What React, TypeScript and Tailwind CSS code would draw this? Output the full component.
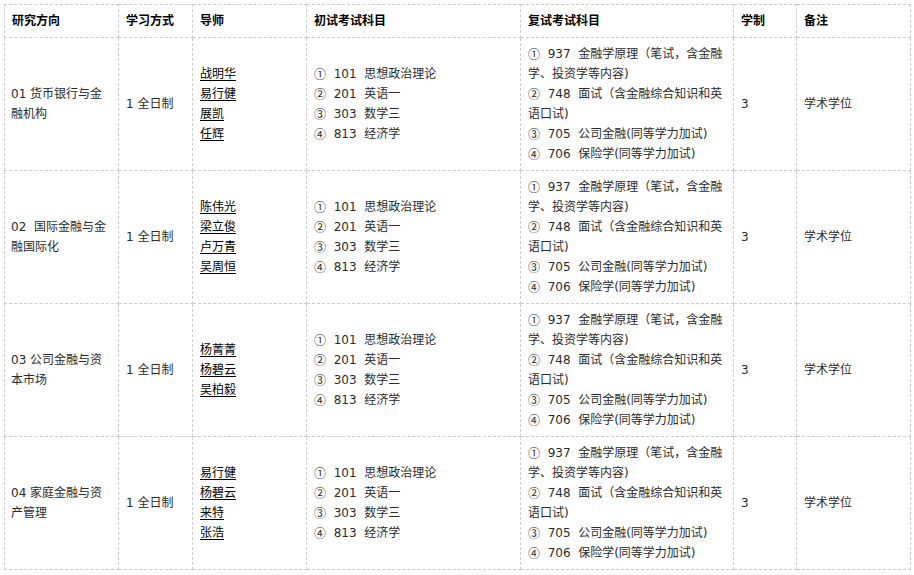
const retest = [
  ['①', '937\u00a0 金融学原理（笔试，含金融学、投资学等内容)'],
  ['②', '748\u00a0 面试（含金融综合知识和英语口试)'],
  ['③', '705\u00a0 公司金融(同等学力加试)'],
  ['④', '706\u00a0 保险学(同等学力加试)'],
]

const firstExam = [
  ['①', '101\u00a0 思想政治理论'],
  ['②', '201\u00a0 英语一'],
  ['③', '303\u00a0 数学三'],
  ['④', '813\u00a0 经济学'],
]

const rows = [
  { dir: '01 货币银行与金融机构', tutors: ['战明华', '易行健', '展凯', '任辉'] },
  { dir: '02\u00a0 国际金融与金融国际化', tutors: ['陈伟光', '梁立俊', '卢万青', '吴周恒'] },
  { dir: '03 公司金融与资本市场', tutors: ['杨菁菁', '杨碧云', '吴柏毅'] },
  { dir: '04 家庭金融与资产管理', tutors: ['易行健', '杨碧云', '来特', '张浩'] },
]

const headers = ['研究方向', '学习方式', '导师', '初试考试科目', '复试考试科目', '学制', '备注']

const cell = 'border border-dashed border-[#ccc] px-[7px] py-[6px] align-middle text-left'

function NumLine({ mark, text }: { mark: string, text: string }) {
  return (
    <div>
      <span className="inline-block h-[20px] align-top leading-[20px] [font-family:'Noto_Sans_CJK_SC',sans-serif]">
        {mark}
      </span>
      {'\u00a0 '}
      {text}
    </div>
  )
}

export default function App() {
  return (
    <div className="bg-white p-[4px] text-[12px] leading-[20px] text-[#2b2b2b] [font-family:'DejaVu_Sans','Noto_Sans_CJK_SC',sans-serif]">
      <table className="w-[906px] table-fixed border-collapse">
        <colgroup>
          <col className="w-[114px]" />
          <col className="w-[74px]" />
          <col className="w-[114px]" />
          <col className="w-[214px]" />
          <col className="w-[213px]" />
          <col className="w-[63px]" />
          <col className="w-[114px]" />
        </colgroup>
        <thead>
          <tr>
            {headers.map((h) => (
              <th key={h} className={`${cell} font-bold text-black`}>
                {h}
              </th>
            ))}
          </tr>
        </thead>
        <tbody>
          {rows.map((r) => (
            <tr key={r.dir}>
              <td className={`${cell} pl-[6px]`}>{r.dir}</td>
              <td className={cell}>1 全日制</td>
              <td className={cell}>
                {r.tutors.map((t) => (
                  <div key={t}>
                    <a className="text-black underline underline-offset-[2px]">{t}</a>
                  </div>
                ))}
              </td>
              <td className={cell}>
                {firstExam.map(([m, l]) => (
                  <NumLine key={m} mark={m} text={l} />
                ))}
              </td>
              <td className={`${cell} pr-[4px]`}>
                {retest.map(([m, l]) => (
                  <NumLine key={m} mark={m} text={l} />
                ))}
              </td>
              <td className={cell}>3</td>
              <td className={cell}>学术学位</td>
            </tr>
          ))}
        </tbody>
      </table>
    </div>
  )
}
